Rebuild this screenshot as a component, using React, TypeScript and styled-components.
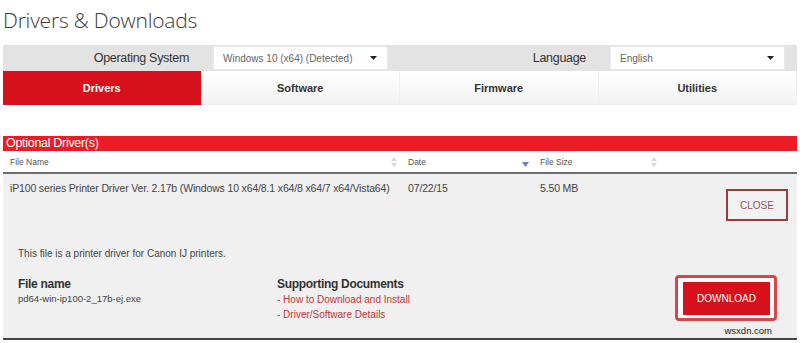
import React from 'react';
import styled, { createGlobalStyle } from 'styled-components';

const GlobalStyle = createGlobalStyle`
  html, body {
    margin: 0;
    padding: 0;
    background: #ffffff;
  }
  body {
    font-family: "Liberation Sans", Arial, sans-serif;
    color: #333;
  }
`;

const SortIcon: React.FC = () => (
  <svg width="6" height="10" viewBox="0 0 6 10">
    <path d="M3 0 L6 4 L0 4 Z" fill="#d6d6d6" />
    <path d="M3 10 L6 6 L0 6 Z" fill="#d6d6d6" />
  </svg>
);

const SortDownIcon: React.FC = () => (
  <svg width="7" height="5" viewBox="0 0 7 5" style={{ marginTop: 5 }}>
    <path d="M0 0 L7 0 L3.5 5 Z" fill="#6f7fbf" />
  </svg>
);

const Caret: React.FC = () => (
  <svg width="7" height="4" viewBox="0 0 7 4">
    <path d="M0 0 L7 0 L3.5 4 Z" fill="#222" />
  </svg>
);

const tabs = ['Drivers', 'Software', 'Firmware', 'Utilities'];

const App: React.FC = () => {
  return (
    <Page>
      <GlobalStyle />
      <Title>Drivers &amp; Downloads</Title>

      <FilterBar>
        <FilterLabel>Operating System</FilterLabel>
        <SelectCell>
          <SelectBox>
            <span>Windows 10 (x64) (Detected)</span>
            <Caret />
          </SelectBox>
        </SelectCell>
        <FilterLabel>Language</FilterLabel>
        <SelectCell>
          <SelectBox>
            <span>English</span>
            <Caret />
          </SelectBox>
        </SelectCell>
      </FilterBar>

      <Tabs>
        {tabs.map((tab, i) => (
          <Tab key={tab} active={i === 0}>
            {tab}
          </Tab>
        ))}
      </Tabs>

      <SectionHeader>Optional Driver(s)</SectionHeader>

      <TableHead>
        <HeadCell>
          <span>File Name</span>
          <SortIcon />
        </HeadCell>
        <HeadCell>
          <span>Date</span>
          <SortDownIcon />
        </HeadCell>
        <HeadCell>
          <span>File Size</span>
          <SortIcon />
        </HeadCell>
        <HeadCell />
      </TableHead>

      <RowArea>
        <RowLine>
          <Cell>iP100 series Printer Driver Ver. 2.17b (Windows 10 x64/8.1 x64/8 x64/7 x64/Vista64)</Cell>
          <Cell>07/22/15</Cell>
          <Cell>5.50 MB</Cell>
          <ActionCell>
            <CloseButton>CLOSE</CloseButton>
          </ActionCell>
        </RowLine>

        <Details>
          <Description>This file is a printer driver for Canon IJ printers.</Description>
          <DetailGrid>
            <InfoBlock>
              <InfoTitle>File name</InfoTitle>
              <InfoText>pd64-win-ip100-2_17b-ej.exe</InfoText>
            </InfoBlock>
            <InfoBlock>
              <InfoTitle>Supporting Documents</InfoTitle>
              <DocLink>- How to Download and Install</DocLink>
              <DocLink>- Driver/Software Details</DocLink>
            </InfoBlock>
            <DownloadWrap>
              <DownloadButton>DOWNLOAD</DownloadButton>
            </DownloadWrap>
          </DetailGrid>
        </Details>
        <Watermark>wsxdn.com</Watermark>
      </RowArea>
    </Page>
  );
};

const Page = styled.div`
  width: 800px;
  height: 343px;
  padding: 0 3px;
  box-sizing: border-box;
  overflow: hidden;
`;

const Title = styled.h1`
  margin: 0;
  padding: 6px 0 0 0;
  height: 45px;
  box-sizing: border-box;
  font-family: "Open Sans", "Liberation Sans", sans-serif;
  font-weight: 300;
  font-size: 21px;
  line-height: 28px;
  color: #3a3a3a;
  letter-spacing: -0.2px;
`;

const FilterBar = styled.div`
  display: grid;
  grid-template-columns: 198px 199px 198px 199px;
  height: 26px;
  background: #e3e3e3;
  align-items: center;
`;

const FilterLabel = styled.div`
  text-align: right;
  padding-right: 12px;
  font-size: 12.5px;
  color: #333;
  letter-spacing: -0.3px;
`;

const SelectCell = styled.div`
  padding-left: 12px;
  display: flex;
  align-items: center;
`;

const SelectBox = styled.div`
  width: 175px;
  height: 24px;
  box-sizing: border-box;
  background: #fff;
  border: 1px solid #e8e8e8;
  display: flex;
  align-items: center;
  justify-content: space-between;
  padding: 0 10px 0 9px;
  font-size: 10px;
  color: #666;
`;

const Tabs = styled.div`
  display: grid;
  grid-template-columns: repeat(4, 1fr);
  height: 34px;
`;

const Tab = styled.div<{ active?: boolean }>`
  display: flex;
  align-items: center;
  justify-content: center;
  font-size: 11px;
  font-weight: bold;
  color: ${(p) => (p.active ? '#fff' : '#333')};
  background: ${(p) =>
    p.active ? '#d7111b' : 'linear-gradient(to bottom, #ffffff 0%, #f3f3f3 100%)'};
  border-right: 1px solid #f0f0f0;
  border-bottom: 1px solid ${(p) => (p.active ? '#d7111b' : '#ececec')};
`;

const SectionHeader = styled.div`
  margin-top: 31px;
  height: 15px;
  background: #ec1c24;
  color: #fff;
  font-size: 12.5px;
  line-height: 15px;
  padding-left: 3px;
  letter-spacing: -0.3px;
`;

const columns = '398px 132px 128px 1fr';

const TableHead = styled.div`
  display: grid;
  grid-template-columns: ${columns};
  height: 21px;
  border-bottom: 2px solid #6e6e6e;
  background: #fff;
`;

const HeadCell = styled.div`
  display: flex;
  align-items: center;
  justify-content: space-between;
  padding: 0 4px 0 7px;
  font-size: 8.5px;
  color: #555;
`;

const RowArea = styled.div`
  position: relative;
  background: #f0f0f0;
  height: 166px;
  border-bottom: 2px solid #444;
  box-sizing: border-box;
`;

const RowLine = styled.div`
  display: grid;
  grid-template-columns: ${columns};
  padding-top: 7px;
  height: 66px;
  box-sizing: border-box;
`;

const Cell = styled.div`
  padding-left: 7px;
  font-size: 10.5px;
  line-height: 14px;
  color: #444;
  letter-spacing: -0.15px;
  white-space: nowrap;
`;

const ActionCell = styled.div`
  display: flex;
  justify-content: flex-end;
  padding: 8px 9px 0 0;
`;

const CloseButton = styled.div`
  width: 62px;
  height: 32px;
  box-sizing: border-box;
  border: 2px solid #9e3b3b;
  display: flex;
  align-items: center;
  justify-content: center;
  font-size: 10px;
  color: #8a5a5a;
  background: #f2f2f2;
`;

const Details = styled.div`
  padding: 8px 0 0 15px;
`;

const Description = styled.div`
  font-size: 10px;
  color: #444;
  line-height: 12px;
`;

const DetailGrid = styled.div`
  display: grid;
  grid-template-columns: 259px 1fr auto;
  margin-top: 17px;
`;

const InfoBlock = styled.div`
  display: flex;
  flex-direction: column;
`;

const InfoTitle = styled.div`
  font-size: 12px;
  font-weight: bold;
  color: #333;
  line-height: 15px;
  letter-spacing: -0.3px;
`;

const InfoText = styled.div`
  font-size: 9.5px;
  color: #444;
  line-height: 14px;
`;

const DocLink = styled.div`
  font-size: 10px;
  color: #c4343a;
  line-height: 15px;
  &:first-of-type {
    margin-top: 2px;
  }
`;

const DownloadWrap = styled.div`
  margin: -2px 20px 0 0;
  width: 102px;
  height: 46px;
  box-sizing: border-box;
  border: 3px solid #d94648;
  border-radius: 4px;
  background: #fff;
  padding: 4px 4px 3px 5px;
`;

const DownloadButton = styled.div`
  height: 100%;
  background: #d7111b;
  color: #fff;
  font-size: 10px;
  display: flex;
  align-items: center;
  justify-content: center;
`;

const Watermark = styled.div`
  position: absolute;
  right: 25px;
  bottom: 2px;
  font-size: 9.5px;
  color: #222;
`;

export default App;
